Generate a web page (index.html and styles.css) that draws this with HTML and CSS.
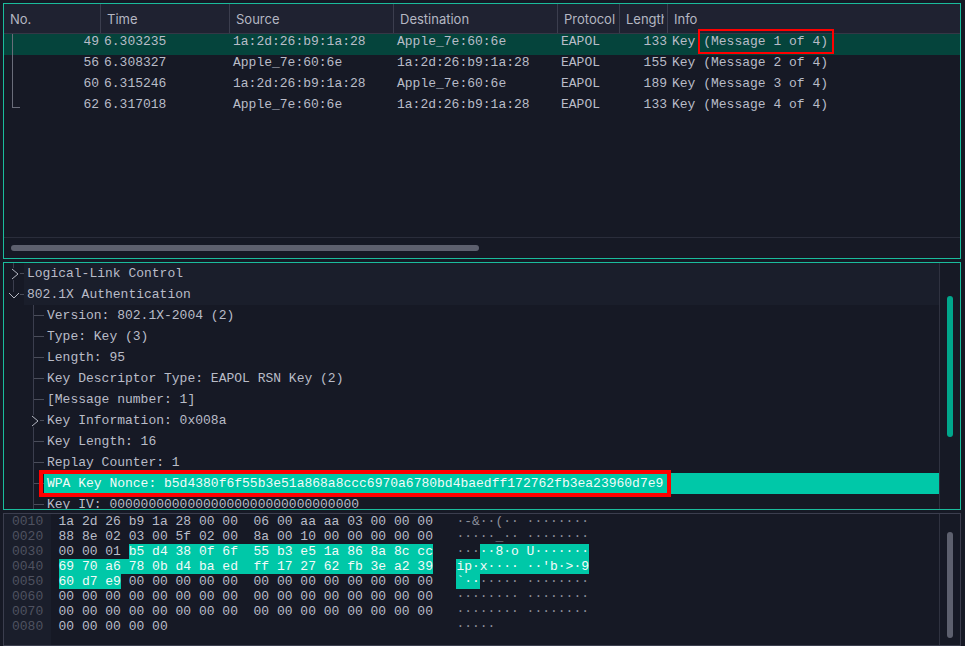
FILE: index.html
```html
<!DOCTYPE html>
<html lang="en">
<head>
<meta charset="UTF-8" />
<title>Wireshark - EAPOL handshake</title>
<link rel="stylesheet" href="styles.css">
</head>
<body>

<!-- Packet list -->
<section class="pane pane-list">
  <div class="cols list-head">
    <div class="hcell">No.</div>
    <div class="hcell">Time</div>
    <div class="hcell">Source</div>
    <div class="hcell">Destination</div>
    <div class="hcell">Protocol</div>
    <div class="hcell"><span class="clipped">Length</span></div>
    <div class="hcell">Info</div>
  </div>
  <div class="list-body">
    <div class="tree-rail"></div>
    <div class="cols packet current">
      <div class="num">49</div><div>6.303235</div><div>1a:2d:26:b9:1a:28</div><div>Apple_7e:60:6e</div><div>EAPOL</div><div class="len">133</div>
      <div class="info">Key <span class="msg">(Message 1 of 4)</span></div>
    </div>
    <div class="cols packet">
      <div class="num">56</div><div>6.308327</div><div>Apple_7e:60:6e</div><div>1a:2d:26:b9:1a:28</div><div>EAPOL</div><div class="len">155</div>
      <div class="info">Key (Message 2 of 4)</div>
    </div>
    <div class="cols packet">
      <div class="num">60</div><div>6.315246</div><div>1a:2d:26:b9:1a:28</div><div>Apple_7e:60:6e</div><div>EAPOL</div><div class="len">189</div>
      <div class="info">Key (Message 3 of 4)</div>
    </div>
    <div class="cols packet">
      <div class="num">62</div><div>6.317018</div><div>Apple_7e:60:6e</div><div>1a:2d:26:b9:1a:28</div><div>EAPOL</div><div class="len">133</div>
      <div class="info">Key (Message 4 of 4)</div>
    </div>
  </div>
  <div class="hscroll"><div class="hthumb"></div></div>
</section>

<!-- Packet details -->
<section class="pane pane-tree">
  <div class="tree">
    <div class="top">
      <div class="node">
        <div class="twig"><svg class="chev" width="10" height="12" viewBox="0 0 10 12"><path d="M2 1l6 5-6 5" fill="none" stroke="#b4b7c2"/></svg></div>
        <div class="label">Logical-Link Control</div>
      </div>
      <div class="node">
        <div class="twig"><svg class="chev open" width="12" height="8" viewBox="0 0 12 8"><path d="M1 1l5 5 5-5" fill="none" stroke="#b4b7c2"/></svg></div>
        <div class="label">802.1X Authentication</div>
      </div>
    </div>
    <div class="children">
      <div class="node"><div class="twig"></div><div class="label">Version: 802.1X-2004 (2)</div></div>
      <div class="node"><div class="twig"></div><div class="label">Type: Key (3)</div></div>
      <div class="node"><div class="twig"></div><div class="label">Length: 95</div></div>
      <div class="node"><div class="twig"></div><div class="label">Key Descriptor Type: EAPOL RSN Key (2)</div></div>
      <div class="node"><div class="twig"></div><div class="label">[Message number: 1]</div></div>
      <div class="node">
        <div class="twig"><svg class="chev" width="10" height="12" viewBox="0 0 10 12"><path d="M2 1l6 5-6 5" fill="none" stroke="#b4b7c2"/></svg></div>
        <div class="label">Key Information: 0x008a</div>
      </div>
      <div class="node"><div class="twig"></div><div class="label">Key Length: 16</div></div>
      <div class="node"><div class="twig"></div><div class="label">Replay Counter: 1</div></div>
      <div class="node"><div class="twig"></div><div class="label selected"><span class="nonce">WPA Key Nonce: b5d4380f6f55b3e51a868a8ccc6970a6780bd4baedff172762fb3ea23960d7e9</span></div></div>
      <div class="node"><div class="twig"></div><div class="label">Key IV: 00000000000000000000000000000000</div></div>
    </div>
  </div>
  <div class="vscroll"><div class="vthumb teal"></div></div>
</section>

<!-- Hex dump -->
<section class="pane pane-hex">
  <div class="gutter">
    <div>0010</div><div>0020</div><div>0030</div><div>0040</div><div>0050</div><div>0060</div><div>0070</div><div>0080</div>
  </div>
  <div class="dump">
    <div class="line">1a 2d 26 b9 1a 28 00 00  06 00 aa aa 03 00 00 00   <span class="asc">·-&amp;··(·· ········</span></div>
    <div class="line">88 8e 02 03 00 5f 02 00  8a 00 10 00 00 00 00 00   <span class="asc">·····_·· ········</span></div>
    <div class="line">00 00 01 <span class="hl">b5 d4 38 0f 6f  55 b3 e5 1a 86 8a 8c cc</span>   <span class="asc">···<span class="hl">··8·o U·······</span></span></div>
    <div class="line"><span class="hl">69 70 a6 78 0b d4 ba ed  ff 17 27 62 fb 3e a2 39</span>   <span class="asc"><span class="hl">ip·x···· ··'b·&gt;·9</span></span></div>
    <div class="line"><span class="hl">60 d7 e9</span> 00 00 00 00 00  00 00 00 00 00 00 00 00   <span class="asc"><span class="hl">`··</span>····· ········</span></div>
    <div class="line">00 00 00 00 00 00 00 00  00 00 00 00 00 00 00 00   <span class="asc">········ ········</span></div>
    <div class="line">00 00 00 00 00 00 00 00  00 00 00 00 00 00 00 00   <span class="asc">········ ········</span></div>
    <div class="line">00 00 00 00 00                                     <span class="asc">·····</span></div>
  </div>
  <div class="vscroll"><div class="vthumb gray"></div></div>
</section>

</body>
</html>
```

FILE: styles.css
```css
html, body {
  margin: 0;
  height: 646px;
  overflow: hidden;
}
body {
  background: #161925;
  padding: 3px 4px 0 3px;
  box-sizing: border-box;
  display: flex;
  flex-direction: column;
  gap: 3px;
  font-family: "Liberation Mono", monospace;
  font-size: 13px;
  color: #b9bcc8;
}
.pane {
  box-sizing: border-box;
  border: 1px solid #1abc9c;
  background: #161925;
  overflow: hidden;
  flex-shrink: 0;
}

/* packet list */
.pane-list {
  height: 256px;
  display: flex;
  flex-direction: column;
}
.cols {
  display: grid;
  grid-template-columns: 97px 129px 164px 164px 62px 48px 1fr;
}
.list-head {
  height: 30px;
  box-sizing: border-box;
  background: #1f2231;
  border-bottom: 1px solid #343746;
  font-family: Inter, sans-serif;
  color: #b4b7c2;
}
.hcell {
  border-right: 1px solid #3b3e4e;
  padding-left: 6px;
  line-height: 30px;
  overflow: hidden;
  white-space: nowrap;
}
.hcell:last-child {
  border-right: none;
}
.clipped {
  display: block;
  width: 38px;
  overflow: hidden;
}
.list-body {
  flex: 1;
  position: relative;
}
.packet {
  height: 21px;
  line-height: 15px;
}
.packet > div {
  padding-left: 3px;
  white-space: nowrap;
}
.packet .num {
  text-align: right;
  padding-right: 2px;
  padding-left: 0;
}
.packet .len {
  text-align: right;
  padding-left: 0;
  padding-right: 1px;
}
.packet .info {
  padding-left: 4px;
}
.packet.current {
  background: #05443c;
}
.msg {
  position: relative;
}
.msg::after {
  content: "";
  position: absolute;
  left: -5px;
  right: -6px;
  top: -5px;
  bottom: -5px;
  border: 2px solid #ff0000;
}
.tree-rail {
  position: absolute;
  left: 8px;
  top: 0;
  width: 7px;
  height: 73px;
  border-left: 1px solid #6a6d7a;
  border-bottom: 1px solid #6a6d7a;
  z-index: 1;
}
.hscroll {
  height: 21px;
  border-top: 1px solid #2a2d3b;
  box-sizing: border-box;
  padding: 7px 0 0 7px;
}
.hthumb {
  width: 468px;
  height: 6px;
  border-radius: 3px;
  background: #5d606e;
}

/* packet details */
.pane-tree {
  height: 248px;
  display: flex;
}
.tree {
  flex: 1;
  min-width: 0;
}
.top {
  margin-left: 9px;
  border-left: 1px solid #3b3e4e;
  height: 30px;
}
.node {
  display: flex;
  height: 21px;
  line-height: 21px;
  white-space: nowrap;
}
.top .label {
  background: #1a1e2b;
}
.twig {
  position: relative;
  width: 10px;
  flex-shrink: 0;
  align-self: center;
  border-top: 1px solid #4a4d5a;
  height: 0;
}
.chev {
  position: absolute;
  left: -4px;
  top: -6px;
  background: #161925;
}
.chev.open {
  left: -6px;
  top: -3px;
}
.label {
  flex: 1;
  padding-left: 3px;
}
.children {
  margin: 12px 0 0 29px;
  border-left: 1px solid #3b3e4e;
}
.selected {
  background: #00c8a8;
  color: #f2fbf9;
}
.nonce {
  position: relative;
}
.nonce::after {
  content: "";
  position: absolute;
  left: -8px;
  right: -8px;
  top: -6px;
  bottom: -6px;
  border: 4px solid #ff0000;
  z-index: 2;
}
.vscroll {
  width: 21px;
  flex-shrink: 0;
  box-sizing: border-box;
  border-left: 1px solid #2f3240;
  padding-left: 7px;
}
.vthumb {
  width: 6px;
  border-radius: 3px;
}
.vthumb.teal {
  margin-top: 33px;
  height: 141px;
  background: #00a68c;
}
.vthumb.gray {
  margin-top: 18px;
  height: 106px;
  background: #5d606e;
}

/* hex dump */
.pane-hex {
  height: 133px;
  display: flex;
  border-color: #3b3e4e;
}
.gutter {
  width: 47px;
  flex-shrink: 0;
  background: #1a1e2b;
  color: #4f5260;
  padding-left: 8px;
  box-sizing: border-box;
  line-height: 15px;
}
.dump {
  flex: 1;
  padding-left: 7.5px;
  line-height: 15px;
}
.line {
  height: 15px;
  white-space: pre;
}
.hl {
  background: #00c8a8;
  color: #f2fbf9;
  display: inline-block;
  height: 15px;
}
.asc {
  color: #8c8f9b;
}
```
